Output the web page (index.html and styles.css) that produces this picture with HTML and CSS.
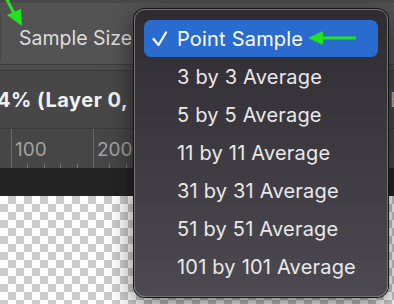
FILE: index.html
```html
<!DOCTYPE html>
<html lang="en">
  <head>
    <meta charset="UTF-8" />
    <meta name="viewport" content="width=device-width, initial-scale=1.0" />
    <title>Sample Size</title>
    <link rel="stylesheet" href="styles.css">
  </head>
  <body>
    <div class="app">
      <div class="options">
        <span class="ctl-edge"></span>
        <span class="label">Sample Size:</span>
      </div>
      <div class="options-gap"></div>
      <div class="tabs">
        <span class="doc-title">4% (Layer 0, RGB/8) *</span>
        <span class="doc-next">E</span>
      </div>
      <div class="ruler">
        <span class="ruler-cell">100</span>
        <span class="ruler-cell">200</span>
        <span class="ruler-cell">300</span>
        <span class="ruler-cell">400</span>
      </div>
      <div class="pasteboard"></div>
      <div class="canvas"></div>
    </div>

    <!-- sample size popup menu -->
    <ul class="menu">
      <li class="menu-item selected">
        <svg class="check" width="16" height="16" viewBox="0 0 16 16">
          <polyline points="1.5,8 6.5,14 14,1.5" fill="none" stroke="#fff" stroke-width="2.2" stroke-linecap="round" stroke-linejoin="round" />
        </svg>
        Point Sample
      </li>
      <li class="menu-item">3 by 3 Average</li>
      <li class="menu-item">5 by 5 Average</li>
      <li class="menu-item">11 by 11 Average</li>
      <li class="menu-item">31 by 31 Average</li>
      <li class="menu-item">51 by 51 Average</li>
      <li class="menu-item">101 by 101 Average</li>
    </ul>

    <!-- green annotation arrows -->
    <svg class="arrow arrow-top" width="26" height="28" viewBox="0 0 26 28">
      <line x1="6" y1="-2" x2="14" y2="13" stroke="#1fe41f" stroke-width="3" />
      <polygon points="7,15 21,9 22,26" fill="#1fe41f" />
    </svg>
    <svg class="arrow arrow-item" width="50" height="16" viewBox="0 0 50 16">
      <line x1="12" y1="8" x2="48" y2="8" stroke="#1fe41f" stroke-width="3" />
      <polygon points="0,8 15,1 15,15" fill="#1fe41f" />
    </svg>
  </body>
</html>
```

FILE: styles.css
```css
body {
  margin: 0;
  width: 394px;
  height: 304px;
  overflow: hidden;
  position: relative;
  font-family: Inter, "Liberation Sans", sans-serif;
  background: #262626;
}
.app {
  display: flex;
  flex-direction: column;
  height: 304px;
}
.options {
  height: 61px;
  border-top: 3px solid #4a4a4a;
  background-color: #535353;
  display: flex;
  align-items: flex-start;
}
.ctl-edge {
  width: 2px;
  height: 47px;
  margin-top: 10px;
  background-color: #4a4a4a;
  border-right: 1px solid #5c5c5c;
}
.label {
  margin-left: 16px;
  margin-top: 23px;
  font-size: 19.5px;
  line-height: 24px;
  color: #dedede;
  white-space: nowrap;
}
.options-gap {
  height: 5px;
  border-top: 1px solid #3c3c3c;
  border-bottom: 1px solid #383838;
  background-color: #4d4d4d;
}
.tabs {
  height: 57px;
  background-color: #474747;
  border-bottom: 1px solid #3a3a3a;
  display: flex;
  align-items: center;
  overflow: hidden;
}
.doc-title {
  margin-left: -3px;
  font-size: 20px;
  font-weight: bold;
  letter-spacing: 0.5px;
  color: #f2f2f2;
  white-space: nowrap;
}
.doc-next {
  margin-left: auto;
  margin-right: -8px;
  font-size: 20px;
  color: #b5b5b5;
}
.ruler {
  height: 39px;
  background-color: #464646;
  display: flex;
  padding-left: 11px;
  overflow: hidden;
}
.ruler-cell {
  flex: 0 0 82px;
  box-sizing: border-box;
  border-left: 1px solid #6a6a6a;
  padding: 11px 0 0 3px;
  font-size: 19px;
  line-height: 19px;
  color: #a2a2a2;
  background-image: repeating-linear-gradient(to right, transparent 0 15.4px, #777777 15.4px 16.4px);
  background-size: 100% 4px;
  background-position: 0 100%;
  background-repeat: no-repeat;
}
.pasteboard {
  height: 28px;
  background-color: #242424;
}
/* transparency checkerboard: xor of two stripe layers, then inverted */
.canvas {
  flex: 1;
  background-color: #000000;
  background-image:
    repeating-linear-gradient(to right, #000000 0 8px, #343434 8px 16px),
    repeating-linear-gradient(to bottom, #000000 0 8px, #343434 8px 16px);
  background-blend-mode: difference;
  filter: invert(1);
}
.menu {
  position: absolute;
  left: 134px;
  top: 9px;
  width: 254px;
  height: 288px;
  box-sizing: border-box;
  margin: 0;
  padding: 10px 9px;
  list-style: none;
  border: 1px solid #727176;
  border-radius: 11px;
  background: linear-gradient(#2e2c31, #4c4a50);
  box-shadow: 0 0 0 1px #161616, 0 8px 26px rgba(0, 0, 0, 0.55);
}
.menu-item {
  height: 38px;
  display: flex;
  align-items: center;
  padding-left: 33px;
  position: relative;
  font-size: 20px;
  letter-spacing: 0.2px;
  color: #e9e9eb;
  border-radius: 7px;
  white-space: nowrap;
}
.menu-item.selected {
  height: 37px;
  margin-bottom: 1px;
  background-color: #2a6bd0;
  color: #ffffff;
}
.check {
  position: absolute;
  left: 8px;
  top: 11px;
}
.arrow {
  position: absolute;
}
.arrow-top {
  left: 0;
  top: 0;
}
.arrow-item {
  left: 308px;
  top: 30px;
}
```
